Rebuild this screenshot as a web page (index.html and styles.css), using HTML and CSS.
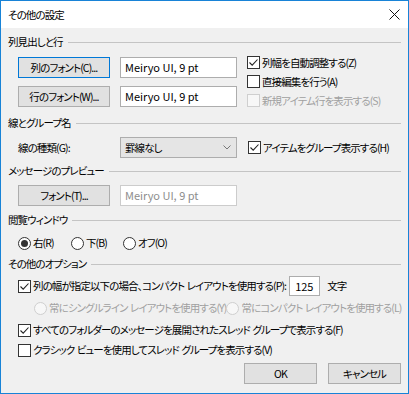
FILE: index.html
```html
<!DOCTYPE html>
<html lang="ja">
<head>
    <meta charset="UTF-8">
    <title>その他の設定</title>
    <link rel="stylesheet" href="styles.css">
</head>
<body>
    <div class="window">
        <div class="titlebar">
            <span class="title">その他の設定</span>
            <svg class="close" width="11" height="11" viewBox="0 0 11 11">
                <path d="M0.5 0.5 L10.5 10.5 M10.5 0.5 L0.5 10.5" stroke="#111" stroke-width="1" fill="none"/>
            </svg>
        </div>

        <div class="content">
            <!-- 列見出しと行 -->
            <div class="group-head head-1"><span>列見出しと行</span><i class="rule"></i></div>
            <div class="cols-row">
                <div class="font-grid">
                    <button class="btn focus">列のフォント(C)...</button>
                    <div class="field">Meiryo UI, 9 pt</div>
                    <button class="btn">行のフォント(W)...</button>
                    <div class="field">Meiryo UI, 9 pt</div>
                </div>
                <div class="check-col">
                    <div class="check"><span class="box"><svg width="11" height="11" viewBox="0 0 11 11"><path d="M1.5 5.5 L4.2 8.2 L9.5 2.5" stroke="#222" stroke-width="1.1" fill="none"/></svg></span>列幅を自動調整する(Z)</div>
                    <div class="check"><span class="box"></span>直接編集を行う(A)</div>
                    <div class="check disabled"><span class="box"></span>新規アイテム行を表示する(S)</div>
                </div>
            </div>

            <!-- 線とグループ名 -->
            <div class="group-head head-2"><span>線とグループ名</span><i class="rule"></i></div>
            <div class="line-row">
                <span class="line-label">線の種類(G):</span>
                <div class="select">
                    <span>罫線なし</span>
                    <svg width="8" height="5" viewBox="0 0 8 5"><path d="M0.5 0.5 L4 4 L7.5 0.5" stroke="#777" stroke-width="1" fill="none"/></svg>
                </div>
                <div class="check"><span class="box"><svg width="11" height="11" viewBox="0 0 11 11"><path d="M1.5 5.5 L4.2 8.2 L9.5 2.5" stroke="#222" stroke-width="1.1" fill="none"/></svg></span>アイテムをグループ表示する(H)</div>
            </div>

            <!-- メッセージのプレビュー -->
            <div class="group-head head-3"><span>メッセージのプレビュー</span><i class="rule"></i></div>
            <div class="preview-row">
                <button class="btn">フォント(T)...</button>
                <div class="field disabled">Meiryo UI, 9 pt</div>
            </div>

            <!-- 閲覧ウィンドウ -->
            <div class="group-head head-4"><span>閲覧ウィンドウ</span><i class="rule"></i></div>
            <div class="radio-row">
                <div class="radio r1"><span class="dot on"></span>右(R)</div>
                <div class="radio r2"><span class="dot"></span>下(B)</div>
                <div class="radio"><span class="dot"></span>オフ(O)</div>
            </div>

            <!-- その他のオプション -->
            <div class="group-head head-5"><span>その他のオプション</span><i class="rule"></i></div>
            <div class="compact-row">
                <div class="check"><span class="box"><svg width="11" height="11" viewBox="0 0 11 11"><path d="M1.5 5.5 L4.2 8.2 L9.5 2.5" stroke="#222" stroke-width="1.1" fill="none"/></svg></span>列の幅が指定以下の場合、コンパクト レイアウトを使用する(P):</div>
                <div class="field small">125</div>
                <span class="unit">文字</span>
            </div>
            <div class="sub-radio-row">
                <div class="radio disabled first"><span class="dot"></span>常にシングルライン レイアウトを使用する(Y)</div>
                <div class="radio disabled"><span class="dot"></span>常にコンパクト レイアウトを使用する(L)</div>
            </div>
            <div class="check wide"><span class="box"><svg width="11" height="11" viewBox="0 0 11 11"><path d="M1.5 5.5 L4.2 8.2 L9.5 2.5" stroke="#222" stroke-width="1.1" fill="none"/></svg></span>すべてのフォルダーのメッセージを展開されたスレッド グループで表示する(F)</div>
            <div class="check wide"><span class="box"></span>クラシック ビューを使用してスレッド グループを表示する(V)</div>

            <div class="actions">
                <button class="btn action">OK</button>
                <button class="btn action">キャンセル</button>
            </div>
        </div>
    </div>
</body>
</html>
```

FILE: styles.css
```css
body {
    margin: 0;
    padding: 0;
    font-family: "Noto Sans CJK JP", "Noto Sans", sans-serif;
    font-size: 10.5px;
    line-height: 16px;
    letter-spacing: -0.9px;
    word-spacing: 1px;
    font-feature-settings: "palt";
    color: #000;
    background-color: #fff;
}

.window {
    width: 409px;
    height: 394px;
    box-sizing: border-box;
    border: 1px solid #1883d7;
    background-color: #f0f0f0;
    display: flex;
    flex-direction: column;
    overflow: hidden;
}

.titlebar {
    height: 27px;
    flex-shrink: 0;
    background-color: #fff;
    display: flex;
    align-items: center;
    justify-content: space-between;
    padding: 0 8px 0 7px;
}

.content {
    padding: 6px 7px 0 7px;
    display: flex;
    flex-direction: column;
}

/* section headers with line */
.group-head {
    height: 16px;
    display: flex;
    align-items: center;
}

.group-head .rule {
    flex: 1;
    height: 0;
    border-top: 1px solid #c4c4c4;
    margin: 1px 0 0 5px;
}

.head-2 { margin-top: 5px; }
.head-3 { margin-top: 5px; }
.head-4 { margin-top: 6px; }
.head-5 { margin-top: 4px; }

/* controls */
.btn {
    font-family: inherit;
    font-size: inherit;
    letter-spacing: inherit;
    word-spacing: inherit;
    font-feature-settings: "palt";
    height: 21px;
    padding: 0;
    margin: 0;
    border: 1px solid #adadad;
    background-color: #e1e1e1;
    color: #000;
    line-height: 17px;
    white-space: nowrap;
}

.btn.focus {
    border-color: #0078d7;
}

.field {
    height: 21px;
    box-sizing: border-box;
    border: 1px solid #adadad;
    background-color: #fff;
    padding: 0 4px;
    font-size: 11px;
    letter-spacing: 0;
    word-spacing: 0;
    line-height: 18px;
    white-space: nowrap;
}

.field.disabled {
    border-color: #cccccc;
    color: #8d8d8d;
}

.check,
.radio {
    display: flex;
    align-items: center;
    white-space: nowrap;
}

.box {
    width: 13px;
    height: 13px;
    box-sizing: border-box;
    border: 1px solid #333;
    background-color: #fff;
    margin-right: 2px;
    display: flex;
    align-items: center;
    justify-content: center;
    flex-shrink: 0;
}

.check.disabled,
.radio.disabled {
    color: #a0a0a0;
}

.check.disabled .box {
    border-color: #cfcfcf;
    background-color: #f7f7f7;
}

.dot {
    width: 13px;
    height: 13px;
    box-sizing: border-box;
    border: 1px solid #333;
    border-radius: 50%;
    background-color: #fff;
    margin-right: 2px;
    display: flex;
    align-items: center;
    justify-content: center;
    flex-shrink: 0;
}

.dot.on::after {
    content: "";
    width: 7px;
    height: 7px;
    border-radius: 50%;
    background-color: #333;
}

.radio.disabled .dot {
    border-color: #cfcfcf;
    background-color: #f7f7f7;
}

/* 列見出しと行 */
.cols-row {
    display: flex;
    padding-left: 10px;
    margin-top: 3px;
}

.font-grid {
    display: grid;
    grid-template-columns: 92px 117px;
    column-gap: 10px;
    row-gap: 8px;
    padding-top: 4px;
    align-content: start;
}

.check-col {
    display: flex;
    flex-direction: column;
    margin-left: 10px;
}

.check-col .check {
    height: 19px;
}

/* 線とグループ名 */
.line-row {
    display: flex;
    align-items: center;
    padding-left: 10px;
    margin-top: 6px;
}

.line-label {
    width: 102px;
}

.select {
    width: 117px;
    height: 21px;
    box-sizing: border-box;
    border: 1px solid #adadad;
    background-color: #e5e5e5;
    display: flex;
    align-items: center;
    justify-content: space-between;
    padding: 0 5px 0 4px;
    margin-right: 11px;
}

/* プレビュー */
.preview-row {
    display: flex;
    gap: 10px;
    padding-left: 10px;
    margin-top: 6px;
}

.preview-row .btn {
    width: 92px;
}

.preview-row .field {
    width: 117px;
}

/* 閲覧ウィンドウ */
.radio-row {
    display: flex;
    height: 18px;
    padding-left: 10px;
    margin-top: 6px;
}

.radio-row .r1 {
    width: 53px;
}

.radio-row .r2 {
    width: 52px;
}

/* その他のオプション */
.compact-row {
    display: flex;
    align-items: center;
    padding-left: 10px;
    margin-top: 4px;
}

.field.small {
    width: 31px;
    height: 20px;
    margin-left: 3px;
    padding: 0 5px;
}

.unit {
    margin-left: 7px;
}

.sub-radio-row {
    display: flex;
    height: 18px;
    padding-left: 26px;
    margin-top: 3px;
}

.sub-radio-row .first {
    width: 199px;
}

.check.wide {
    height: 20px;
    padding-left: 10px;
}

.sub-radio-row + .check.wide {
    margin-top: 3px;
}

.actions {
    display: flex;
    justify-content: flex-end;
    gap: 11px;
    margin-top: 3px;
}

.btn.action {
    width: 73px;
}
```
